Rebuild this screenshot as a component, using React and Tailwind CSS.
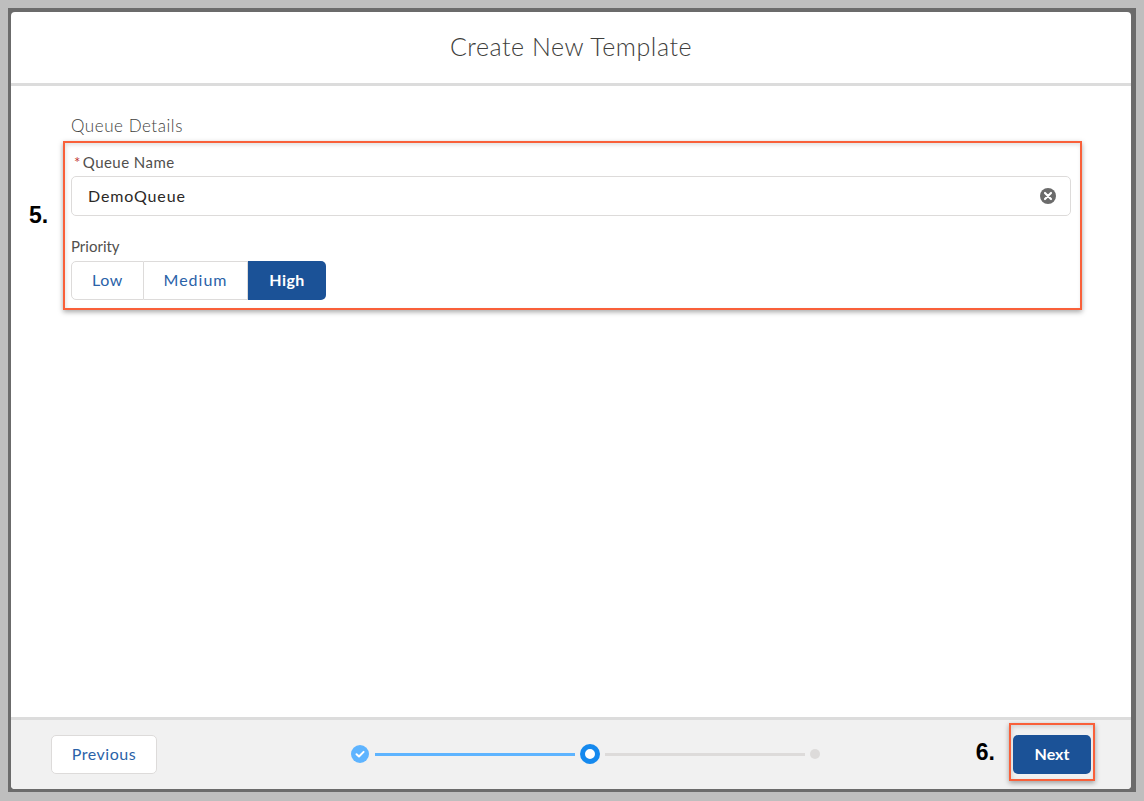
import React from "react";

const sans = { fontFamily: '"Lato", "Open Sans", sans-serif' };

function Step() {
  return (
    <div className="flex items-center">
      <div className="w-[18px] h-[18px] rounded-full bg-[#5eb4ff] flex items-center justify-center">
        <svg width="12" height="12" viewBox="0 0 12 12" fill="none">
          <path d="M2.5 6.2 L5 8.5 L9.6 3.9" stroke="#fff" strokeWidth="2" strokeLinecap="round" strokeLinejoin="round" />
        </svg>
      </div>
      <div className="ml-[6px] w-[200px] h-[3px] bg-[#5eb4ff]" />
      <div className="ml-[5px] w-[20px] h-[20px] rounded-full border-[5px] border-[#1589ee] bg-white" />
      <div className="ml-[5px] w-[200px] h-[3px] bg-[#dddbda]" />
      <div className="ml-[5px] w-[10px] h-[10px] rounded-full bg-[#dddbda]" />
    </div>
  );
}

export default function App() {
  return (
    <div className="w-[1144px] h-[801px] bg-[#bebebe] pt-[8px] pl-[8px] pr-[8px] pb-[9px] overflow-hidden" style={sans}>
      <div className="h-full bg-[#6b6b6b] pt-[4px] pl-[3px] pr-[5px] pb-[3px]">
        <div className="h-full bg-white rounded-[4px] flex flex-col overflow-hidden">
          <header className="h-[74px] shrink-0 border-b-[3px] border-[#dcdcdc] flex items-center justify-center pb-[2px]">
            <h1 className="text-[25px] font-light text-[#3e3e3c] tracking-[0.55px]">Create New Template</h1>
          </header>

          <main className="flex-1 pt-[30px]">
            <div className="pl-[60px] text-[17px] leading-[20px] font-light text-[#3e3e3c] tracking-[0.55px]">Queue Details</div>
            <div className="flex items-start mt-[5px] pl-[18px]">
              <div className="w-[34px] shrink-0 mt-[60px] text-[23px] leading-[28px] font-bold text-black" style={{ fontFamily: '"Liberation Sans", sans-serif' }}>5.</div>
              <div className="w-[1019px] h-[169px] border-2 border-[#f9603a] shadow-[0_2px_5px_rgba(0,0,0,0.35),inset_1px_2px_4px_rgba(0,0,0,0.12)] pt-[9px] px-[6px]">
                <div className="text-[15px] leading-[20px] text-[#514f4d] pl-[3px] tracking-[0.45px]">
                  <span className="text-[#c23934] mr-[2px]">*</span>Queue Name
                </div>
                <div className="mt-[4px] h-[40px] w-[1000px] border border-[#dddbda] rounded-[5px] bg-white flex items-center justify-between pl-[16px] pr-[14px]">
                  <span className="text-[16px] text-[#2b2826] tracking-[0.85px]">DemoQueue</span>
                  <svg width="16" height="16" viewBox="0 0 16 16">
                    <circle cx="8" cy="8" r="8" fill="#6b6b6b" />
                    <path d="M5 5 L11 11 M11 5 L5 11" stroke="#fff" strokeWidth="2.2" strokeLinecap="round" />
                  </svg>
                </div>
                <div className="mt-[20px] text-[15px] leading-[20px] text-[#514f4d]">Priority</div>
                <div className="mt-[5px] flex h-[39px] w-[255px] text-[16px] leading-[24px] bg-white">
                  <div className="w-[73px] border border-[#dddbda] rounded-l-[5px] flex items-center justify-center text-[#2a62a8] tracking-[0.6px] pb-[1px]">Low</div>
                  <div className="w-[104px] border-y border-r border-[#dddbda] flex items-center justify-center text-[#2a62a8] tracking-[1px] pb-[1px]">Medium</div>
                  <div className="w-[78px] bg-[#1b5297] rounded-r-[5px] flex items-center justify-center text-white font-bold tracking-[0.4px] pb-[1px]">High</div>
                </div>
              </div>
            </div>
          </main>

          <footer className="h-[72px] shrink-0 border-t-[3px] border-[#dcdcdc] bg-[#f1f1f1] flex items-start pl-[40px] pr-[36px]">
            <button className="mt-[15px] w-[106px] h-[39px] bg-white border border-[#dddbda] rounded-[5px] text-[16px] text-[#2a62a8] tracking-[0.55px] pb-[2px]">Previous</button>
            <div className="mt-[24px] ml-[194px]"><Step /></div>
            <div className="ml-auto flex items-start">
              <div className="mt-[18px] mr-[14px] text-[23px] leading-[28px] font-bold text-black" style={{ fontFamily: '"Liberation Sans", sans-serif' }}>6.</div>
              <div className="mt-[3px] w-[86px] h-[58px] border-2 border-[#f9603a] shadow-[0_2px_5px_rgba(0,0,0,0.35),inset_1px_2px_4px_rgba(0,0,0,0.12)] pt-[10px] pl-[2px]">
                <button className="w-[78px] h-[39px] bg-[#1b5297] rounded-[5px] text-white text-[16px] font-bold pb-[2px]">Next</button>
              </div>
            </div>
          </footer>
        </div>
      </div>
    </div>
  );
}
